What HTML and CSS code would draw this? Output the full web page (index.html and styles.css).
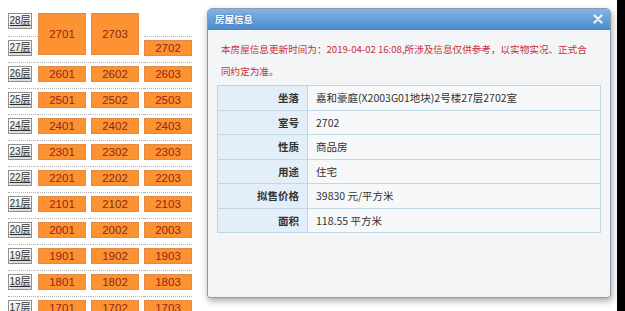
FILE: index.html
```html
<!DOCTYPE html>
<html lang="zh-CN">
  <head>
    <meta charset="UTF-8" />
    <meta name="viewport" content="width=device-width, initial-scale=1.0" />
    <title>楼盘表</title>
    <link rel="stylesheet" href="styles.css">
  </head>
  <body>
    <div class="page">
      <table class="floors">
        <tr>
          <td class="floor"><a class="floor-tag">28层</a></td>
          <td rowspan="2"><span class="unit unit-tall">2701</span></td>
          <td rowspan="2"><span class="unit unit-tall">2703</span></td>
          <td></td>
        </tr>
        <tr>
          <td class="floor"><a class="floor-tag">27层</a></td>
          <td><span class="unit">2702</span></td>
        </tr>
        <tr>
          <td class="floor"><a class="floor-tag">26层</a></td>
          <td><span class="unit">2601</span></td>
          <td><span class="unit">2602</span></td>
          <td><span class="unit">2603</span></td>
        </tr>
        <tr>
          <td class="floor"><a class="floor-tag">25层</a></td>
          <td><span class="unit">2501</span></td>
          <td><span class="unit">2502</span></td>
          <td><span class="unit">2503</span></td>
        </tr>
        <tr>
          <td class="floor"><a class="floor-tag">24层</a></td>
          <td><span class="unit">2401</span></td>
          <td><span class="unit">2402</span></td>
          <td><span class="unit">2403</span></td>
        </tr>
        <tr>
          <td class="floor"><a class="floor-tag">23层</a></td>
          <td><span class="unit">2301</span></td>
          <td><span class="unit">2302</span></td>
          <td><span class="unit">2303</span></td>
        </tr>
        <tr>
          <td class="floor"><a class="floor-tag">22层</a></td>
          <td><span class="unit">2201</span></td>
          <td><span class="unit">2202</span></td>
          <td><span class="unit">2203</span></td>
        </tr>
        <tr>
          <td class="floor"><a class="floor-tag">21层</a></td>
          <td><span class="unit">2101</span></td>
          <td><span class="unit">2102</span></td>
          <td><span class="unit">2103</span></td>
        </tr>
        <tr>
          <td class="floor"><a class="floor-tag">20层</a></td>
          <td><span class="unit">2001</span></td>
          <td><span class="unit">2002</span></td>
          <td><span class="unit">2003</span></td>
        </tr>
        <tr>
          <td class="floor"><a class="floor-tag">19层</a></td>
          <td><span class="unit">1901</span></td>
          <td><span class="unit">1902</span></td>
          <td><span class="unit">1903</span></td>
        </tr>
        <tr>
          <td class="floor"><a class="floor-tag">18层</a></td>
          <td><span class="unit">1801</span></td>
          <td><span class="unit">1802</span></td>
          <td><span class="unit">1803</span></td>
        </tr>
        <tr>
          <td class="floor"><a class="floor-tag">17层</a></td>
          <td><span class="unit">1701</span></td>
          <td><span class="unit">1702</span></td>
          <td><span class="unit">1703</span></td>
        </tr>
      </table>

      <!-- 房屋信息弹窗 -->
      <div class="dialog">
        <div class="dialog-header">
          <span class="dialog-title">房屋信息</span>
          <span class="dialog-close">
            <svg width="10" height="10" viewBox="0 0 10 10">
              <path d="M1.5 1.5 L8.5 8.5 M8.5 1.5 L1.5 8.5" stroke="#eef4fb" stroke-width="2.2" stroke-linecap="round" />
            </svg>
          </span>
        </div>
        <div class="dialog-body">
          <p class="notice">本房屋信息更新时间为：2019-04-02 16:08,所涉及信息仅供参考，以实物实况、正式合同约定为准。</p>
          <table class="info">
            <tr><th>坐落</th><td>嘉和豪庭(X2003G01地块)2号楼27层2702室</td></tr>
            <tr><th>室号</th><td>2702</td></tr>
            <tr><th>性质</th><td>商品房</td></tr>
            <tr><th>用途</th><td>住宅</td></tr>
            <tr><th>拟售价格</th><td>39830 元/平方米</td></tr>
            <tr><th>面积</th><td>118.55 平方米</td></tr>
          </table>
        </div>
      </div>
    </div>
    <div class="edge"></div>
  </body>
</html>
```

FILE: styles.css
```css
* {
  box-sizing: border-box;
  margin: 0;
  padding: 0;
}

html,
body {
  height: 100%;
}

body {
  display: flex;
  overflow: hidden;
  background-color: #fff;
  font-family: "Liberation Sans", "Noto Sans CJK SC", sans-serif;
}

.page {
  position: relative;
  flex: 1;
  padding: 10px 0 0 8px;
}

.edge {
  width: 8px;
  background-color: #000;
}

/* 楼层表 */
.floors {
  border-collapse: collapse;
}

.floors td {
  height: 26px;
  padding: 3px 5px 0 0;
  border-bottom: 1px dotted #b0b0b0;
  vertical-align: top;
}

.floors td:last-child {
  padding-right: 0;
}

.floors td.floor {
  padding-right: 6px;
}

.floor-tag {
  display: block;
  width: 24px;
  height: 16px;
  border: 1px solid #8f8f8f;
  background: linear-gradient(#fbfbfb, #dcdcdc);
  box-shadow: inset 1px 1px 0 #fff;
  color: #333;
  font-size: 10px;
  line-height: 14px;
  text-align: center;
  text-decoration: underline;
  cursor: pointer;
}

.unit {
  display: flex;
  align-items: center;
  justify-content: center;
  width: 48px;
  height: 16px;
  border: 1px solid #e38a45;
  background-color: #fd9232;
  color: #8c2a14;
  font-size: 11.5px;
}

.unit-tall {
  height: 42px;
}

/* 弹窗 */
.dialog {
  position: absolute;
  left: 207px;
  top: 8px;
  width: 404px;
  height: 290px;
  border: 1px solid #8e9baa;
  border-radius: 5px 5px 3px 3px;
  background-color: #f4f5f7;
  box-shadow: 1px 3px 7px rgba(0, 0, 0, 0.35);
  overflow: hidden;
}

.dialog-header {
  display: flex;
  align-items: center;
  justify-content: space-between;
  height: 21px;
  padding: 0 7px 0 7px;
  background: linear-gradient(#80b5e5, #4d8dcd);
  border-bottom: 1px solid #4a86c2;
}

.dialog-title {
  color: #fff;
  font-family: "Noto Sans CJK SC", sans-serif;
  font-size: 9.5px;
  font-weight: bold;
  text-shadow: 0 0 2px #2f679e;
}

.dialog-close {
  display: flex;
}

.dialog-body {
  padding: 8px 9px 0 9px;
}

.notice {
  padding: 0 10px 0 4px;
  color: #c92d33;
  font-family: "Noto Sans CJK SC", sans-serif;
  font-size: 9.6px;
  line-height: 22px;
}

.info {
  width: 100%;
  margin-top: 3px;
  border-collapse: collapse;
  font-family: "Noto Sans CJK SC", sans-serif;
  font-size: 10.5px;
  color: #333;
}

.info th,
.info td {
  height: 24.5px;
  border: 1px solid #bfd8e4;
}

.info th {
  width: 90px;
  padding-right: 8px;
  background-color: #e4eef8;
  text-align: right;
  font-weight: bold;
}

.info td {
  padding-left: 8px;
  background-color: #f7f8fa;
}
```
